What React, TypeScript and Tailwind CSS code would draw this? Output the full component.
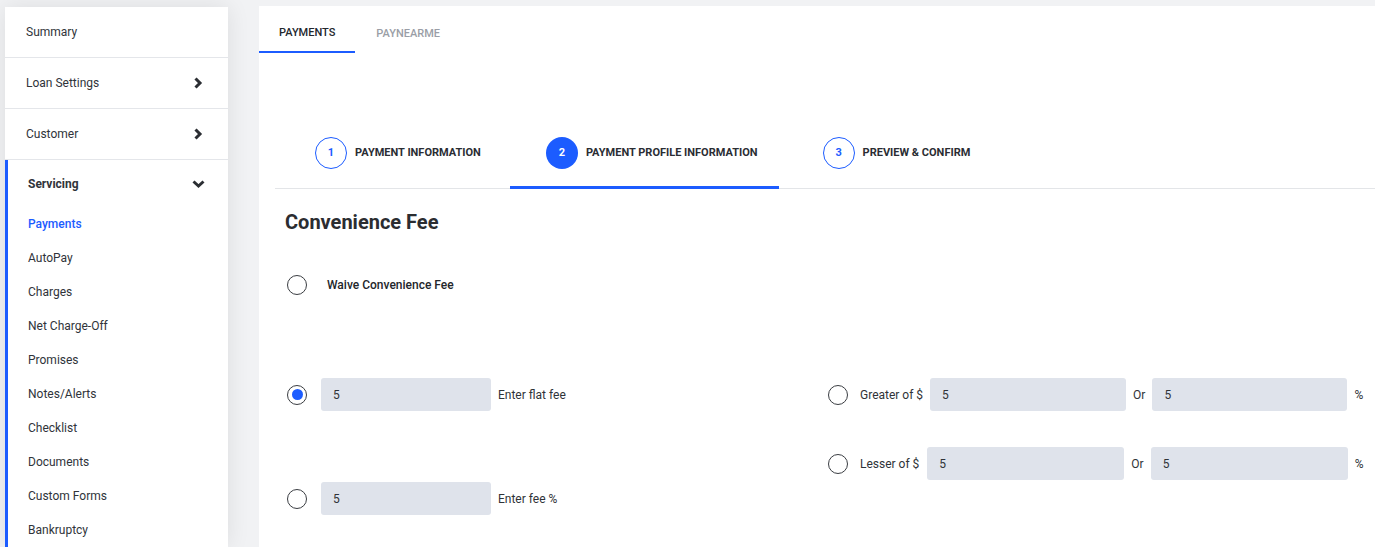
import React from 'react';

function ChevronRight() {
  return (
    <svg width="10" height="12" viewBox="0 0 10 12" className="text-[#2b2e33]">
      <polyline points="2.5,1.5 7,6 2.5,10.5" fill="none" stroke="currentColor" strokeWidth="3" strokeLinejoin="miter" />
    </svg>
  );
}

function ChevronDown() {
  return (
    <svg width="13" height="10" viewBox="0 0 13 10" className="text-[#2b2e33]">
      <polyline points="1.5,2.5 6.5,7 11.5,2.5" fill="none" stroke="currentColor" strokeWidth="3" strokeLinejoin="miter" />
    </svg>
  );
}

function Radio({ checked = false }: { checked?: boolean }) {
  return (
    <span className="flex h-5 w-5 shrink-0 items-center justify-center rounded-full border-[1.5px] border-[#3a3d42] bg-white">
      {checked && <span className="h-[11px] w-[11px] rounded-full bg-[#1c5cff]" />}
    </span>
  );
}

function FeeInput({ value, width }: { value: string; width: string }) {
  return (
    <div className={`flex h-[33px] items-center rounded-[3px] bg-[#dfe3eb] pl-3 text-xs text-[#2f3338] ${width}`}>
      {value}
    </div>
  );
}

const subItems = ['Payments', 'AutoPay', 'Charges', 'Net Charge-Off', 'Promises', 'Notes/Alerts', 'Checklist', 'Documents', 'Custom Forms', 'Bankruptcy'];

function Sidebar() {
  return (
    <aside className="mt-[7px] ml-[5px] w-[223px] shrink-0 bg-white shadow-[0_0_22px_rgba(0,0,0,0.09)]">
      <div className="flex h-[51px] items-center border-b border-[#e4e6ea] pl-[21px] text-xs text-[#30343a]">Summary</div>
      <div className="flex h-[51px] items-center justify-between border-b border-[#e4e6ea] pl-[21px] pr-[25px] text-xs text-[#30343a]">
        <span>Loan Settings</span>
        <ChevronRight />
      </div>
      <div className="flex h-[51px] items-center justify-between border-b border-[#e4e6ea] pl-[21px] pr-[25px] text-xs text-[#30343a]">
        <span>Customer</span>
        <ChevronRight />
      </div>
      <div className="border-l-[3px] border-[#1c5cff]">
        <div className="flex h-[47px] items-center justify-between pl-5 pr-[23px] text-xs font-bold text-[#30343a]">
          <span>Servicing</span>
          <ChevronDown />
        </div>
        <ul className="pb-4">
          {subItems.map((item, i) => (
            <li
              key={item}
              className={`flex h-[34px] items-center pl-5 text-xs ${i === 0 ? 'font-medium text-[#1c5cff]' : 'text-[#30343a]'}`}
            >
              {item}
            </li>
          ))}
        </ul>
      </div>
    </aside>
  );
}

const steps = [
  { n: '1', label: 'PAYMENT INFORMATION', active: false },
  { n: '2', label: 'PAYMENT PROFILE INFORMATION', active: true },
  { n: '3', label: 'PREVIEW & CONFIRM', active: false },
];

export default function App() {
  return (
    <div
      className="flex h-[547px] w-full overflow-hidden bg-[#f1f2f4]"
      style={{ fontFamily: 'Roboto, "Liberation Sans", sans-serif' }}
    >
      <Sidebar />
      <main className="mt-[6px] ml-[31px] flex-1 bg-white">
        <div className="flex h-[47px]">
          <div className="flex items-center border-b-2 border-[#1c5cff] px-5 pt-[9px] text-[11px] font-medium text-[#23272d]">
            PAYMENTS
          </div>
          <div className="flex items-center px-[21px] pt-[9px] text-[11px] font-medium text-[#9a9ea6]">PAYNEARME</div>
        </div>

        <div className="mt-[66px] ml-4">
          <div className="flex gap-2 border-b border-[#e3e5e8] pl-1">
            {steps.map((s) => (
              <div
                key={s.n}
                className={`-mb-px flex items-center gap-2 pt-[18px] pb-[17px] pl-9 pr-[21px] border-b-[3px] ${s.active ? 'border-[#1c5cff]' : 'border-transparent'}`}
              >
                <span
                  className={`flex h-8 w-8 items-center justify-center rounded-full text-[11px] font-bold ${s.active ? 'bg-[#1c5cff] text-white' : 'border border-[#1c5cff] text-[#1c5cff]'}`}
                >
                  {s.n}
                </span>
                <span className="text-[11px] font-bold text-[#2a2d33]">{s.label}</span>
              </div>
            ))}
          </div>

          <h2 className="mt-[19px] ml-[10px] text-[20px] leading-7 font-bold text-[#2b2d31]">Convenience Fee</h2>

          <div className="mt-[39px] ml-3 flex items-center gap-5">
            <Radio />
            <span className="text-xs font-medium text-[#23262b]">Waive Convenience Fee</span>
          </div>

          <div className="mt-[83px] ml-3 flex">
            <div className="flex w-[541px] flex-col gap-[71px]">
              <div className="flex items-center">
                <Radio checked />
                <div className="ml-[14px]">
                  <FeeInput value="5" width="w-[170px]" />
                </div>
                <span className="ml-[7px] text-xs text-[#2f3338]">Enter flat fee</span>
              </div>
              <div className="flex items-center">
                <Radio />
                <div className="ml-[14px]">
                  <FeeInput value="5" width="w-[170px]" />
                </div>
                <span className="ml-[7px] text-xs text-[#2f3338]">Enter fee %</span>
              </div>
            </div>

            <div className="flex flex-col gap-9">
              <div className="flex items-center">
                <Radio />
                <span className="ml-3 text-xs text-[#2f3338]">Greater of $</span>
                <div className="ml-[7px]">
                  <FeeInput value="5" width="w-[196px]" />
                </div>
                <span className="ml-[7px] text-xs text-[#2f3338]">Or</span>
                <div className="ml-[7px]">
                  <FeeInput value="5" width="w-[195px]" />
                </div>
                <span className="ml-[7px] text-xs text-[#2f3338]">%</span>
              </div>
              <div className="flex items-center">
                <Radio />
                <span className="ml-3 text-xs text-[#2f3338]">Lesser of $</span>
                <div className="ml-2">
                  <FeeInput value="5" width="w-[197px]" />
                </div>
                <span className="ml-[7px] text-xs text-[#2f3338]">Or</span>
                <div className="ml-[7px]">
                  <FeeInput value="5" width="w-[197px]" />
                </div>
                <span className="ml-[7px] text-xs text-[#2f3338]">%</span>
              </div>
            </div>
          </div>
        </div>
      </main>
    </div>
  );
}
